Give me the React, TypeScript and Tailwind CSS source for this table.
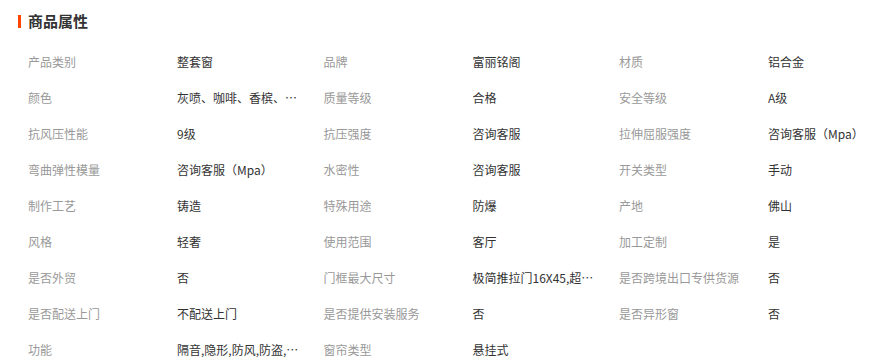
import React from "react";

const rows: [string, string][] = [
  ["产品类别", "整套窗"],
  ["品牌", "富丽铭阁"],
  ["材质", "铝合金"],
  ["颜色", "灰喷、咖啡、香槟、…"],
  ["质量等级", "合格"],
  ["安全等级", "A级"],
  ["抗风压性能", "9级"],
  ["抗压强度", "咨询客服"],
  ["拉伸屈服强度", "咨询客服（Mpa）"],
  ["弯曲弹性模量", "咨询客服（Mpa）"],
  ["水密性", "咨询客服"],
  ["开关类型", "手动"],
  ["制作工艺", "铸造"],
  ["特殊用途", "防爆"],
  ["产地", "佛山"],
  ["风格", "轻奢"],
  ["使用范围", "客厅"],
  ["加工定制", "是"],
  ["是否外贸", "否"],
  ["门框最大尺寸", "极简推拉门16X45,超…"],
  ["是否跨境出口专供货源", "否"],
  ["是否配送上门", "不配送上门"],
  ["是否提供安装服务", "否"],
  ["是否异形窗", "否"],
  ["功能", "隔音,隐形,防风,防盗,…"],
  ["窗帘类型", "悬挂式"],
];

export default function App() {
  return (
    <div
      className="w-[885px] h-[363px] bg-white overflow-hidden pl-[18px]"
      style={{ fontFamily: '"Noto Sans CJK SC", "Liberation Sans", sans-serif' }}
    >
      <div className="h-[44px] flex items-center pb-[2px]">
        <div className="w-[3px] h-[13px] bg-[#ff4400] mr-[7px]" />
        <div className="text-[15px] font-bold text-[#333] leading-[20px]">商品属性</div>
      </div>
      <div className="grid grid-cols-[295.5px_295.5px_260px] ml-[10px]">
        {rows.map(([k, v], i) => (
          <div key={i} className="h-[36px] flex items-center text-[12px] leading-[18px]">
            <div className="w-[149px] shrink-0 text-[#999] whitespace-nowrap">{k}</div>
            <div className="text-[#333] whitespace-nowrap">{v}</div>
          </div>
        ))}
      </div>
    </div>
  );
}
